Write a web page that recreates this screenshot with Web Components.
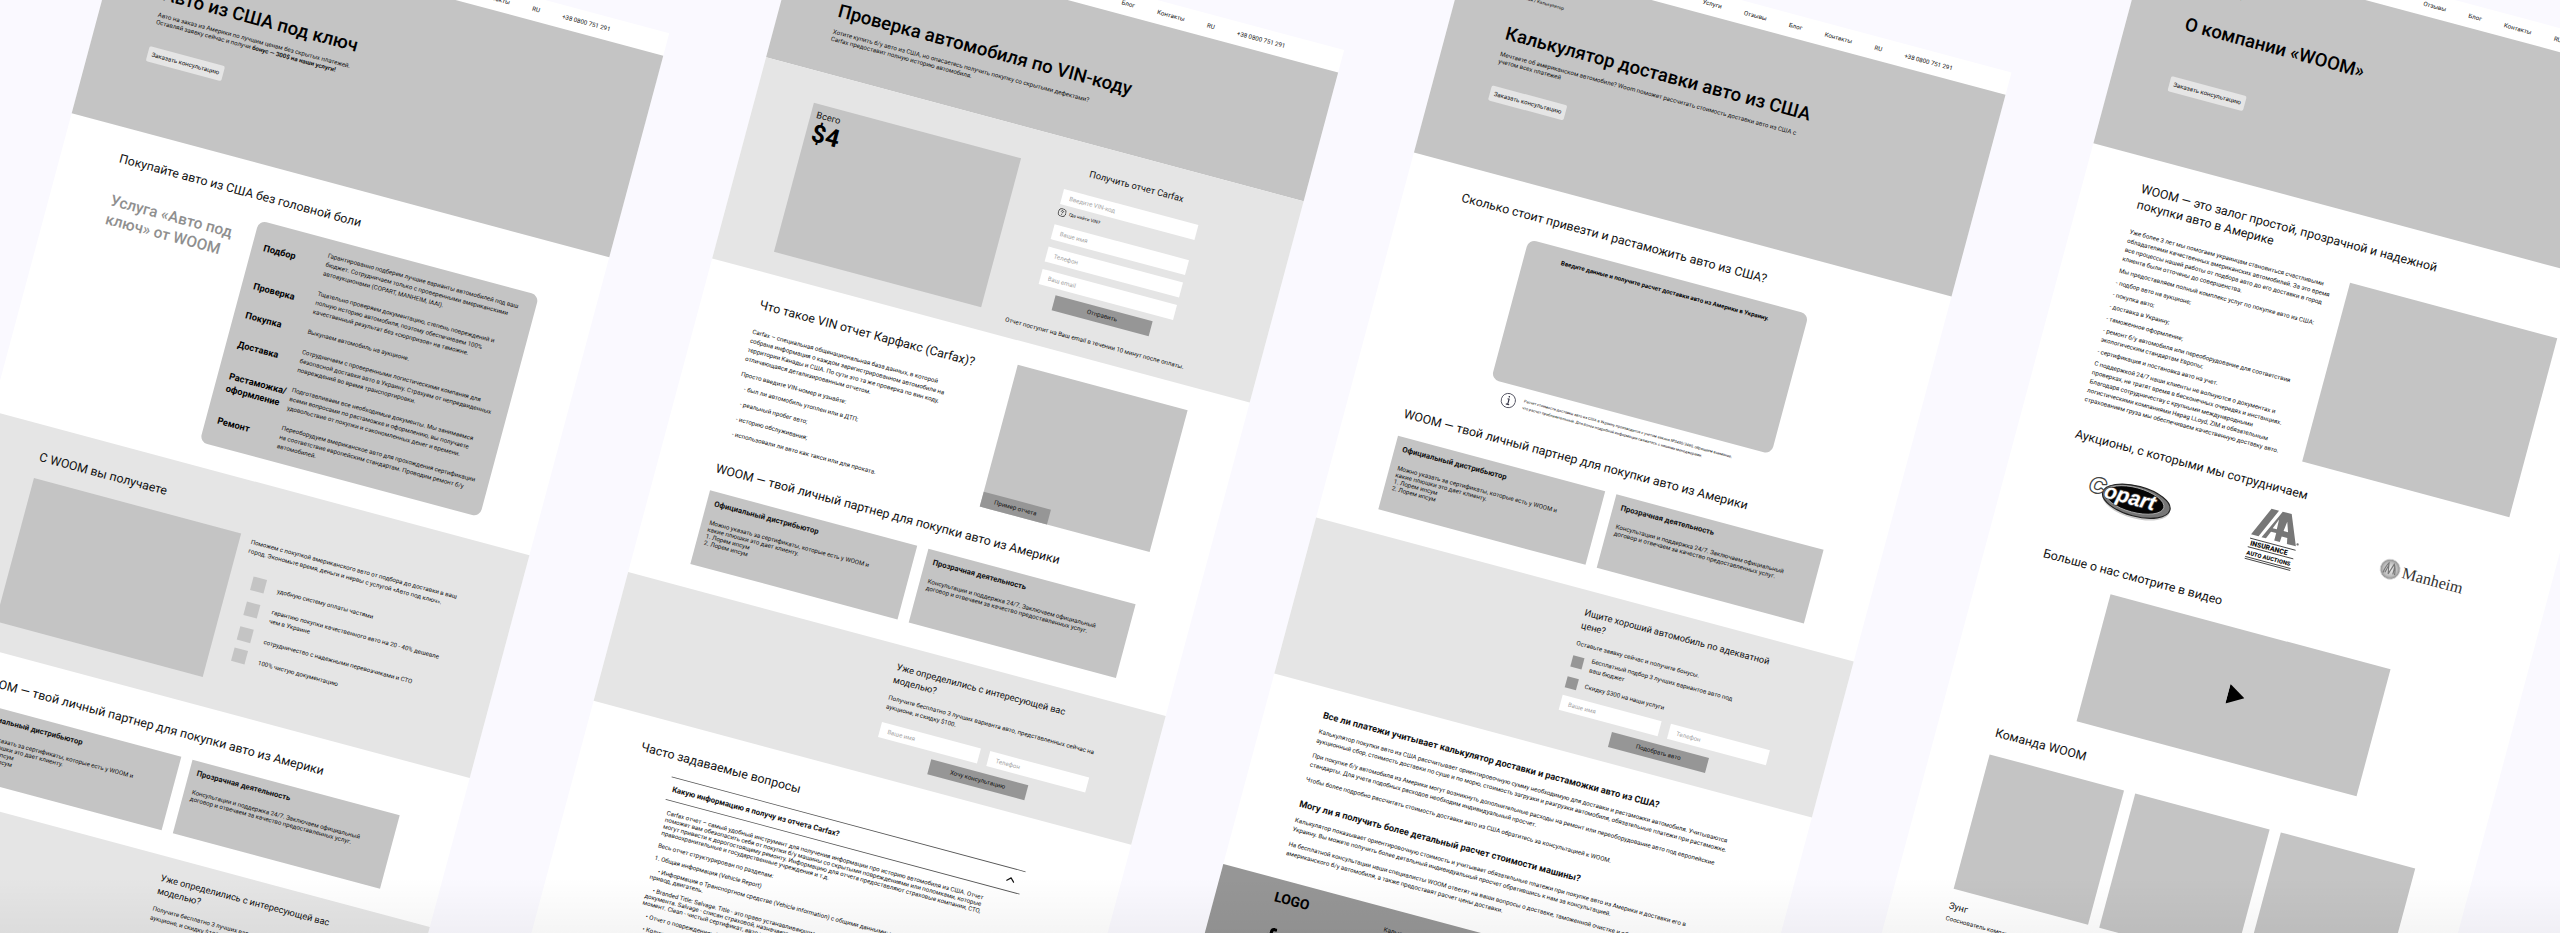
<!DOCTYPE html>
<html lang="ru">
<head>
<meta charset="utf-8">
<title>WOOM — прототипы страниц</title>
<style>
  html, body { margin: 0; height: 100%; }
  body { background: #faf9ff; font-family: Roboto, "Liberation Sans", sans-serif; color: #111; overflow: hidden; }
</style>
</head>
<body>
<wf-canvas>
  <wf-turnkey style="--x: 255px; --y: -365px"></wf-turnkey>
  <wf-carfax style="--x: 1953px; --y: -775px"></wf-carfax>
  <wf-calculator style="--x: 3636px; --y: -1166px"></wf-calculator>
  <wf-about style="--x: 5328px; --y: -1644px"></wf-about>
</wf-canvas>

<script>
const BASE = `
  *, *::before, *::after { box-sizing: border-box; }
  h1, h2, h3, p, ul { margin: 0; padding: 0; font-weight: 400; }
  ul { list-style: none; }
  h2 { font-size: 32px; line-height: 40px; white-space: nowrap; }
  h3 { font-size: 24px; line-height: 34px; white-space: nowrap; }
  p, li { font-size: 16px; line-height: 24px; white-space: nowrap; }
  a { color: inherit; text-decoration: none; }
  section { padding: 60px 150px 0; }
  .band { background: #e5e5e5; }
  .image { background: #c4c4c4; }
`;

function define(name, css, html, setup) {
  const template = document.createElement('template');
  template.innerHTML = `<style>${BASE}${css}</style>${html}`;
  customElements.define(name, class extends HTMLElement {
    constructor() {
      super();
      this.attachShadow({ mode: 'open' }).append(template.content.cloneNode(true));
    }
    connectedCallback() { if (setup) setup.call(this, this.shadowRoot); }
  });
}

/* Button with a slotted caption; the "light" kind sits on the hero. */
define('wf-button', `
  :host { display: block; width: 260px; }
  button { display: block; width: 100%; height: 40px; padding: 0; border: 0; background: #969696;
    font: 400 16px/40px Roboto, "Liberation Sans", sans-serif; color: #111; white-space: nowrap; }
  :host([kind="light"]) { width: 202px; }
  :host([kind="light"]) button { background: #e5e5e5; border-radius: 5px; }
`, `<button type="button"><slot></slot></button>`);

define('wf-field', `
  :host { display: block; }
  input { display: block; width: 100%; height: 40px; padding: 0 20px; border: 0; border-radius: 0; background: #fff;
    font: 400 16px/24px Roboto, "Liberation Sans", sans-serif; color: #111; }
  input::placeholder { color: #a6a6a6; opacity: 1; }
`, `<input type="text">`, function (root) {
  const input = root.querySelector('input');
  input.placeholder = this.getAttribute('label');
  input.setAttribute('aria-label', this.getAttribute('label'));
});

define('wf-nav', `
  :host { display: block; }
  nav { display: flex; justify-content: flex-end; gap: 60px; height: 60px; padding: 0 150px; }
  a { font-size: 16px; line-height: 60px; white-space: nowrap; }
`, `<nav>
  <a href="#services">Услуги</a><a href="#reviews">Отзывы</a><a href="#blog">Блог</a>
  <a href="#contacts">Контакты</a><a href="#lang">RU</a><a href="tel:+380800751291">+38 0800 751 291</a>
</nav>`);

define('wf-hero', `
  :host { display: block; height: 540px; padding: 72px 150px 0; background: #c4c4c4; }
  :host([short]) { height: 345px; }
  .crumb { height: 16px; font-size: 12px; line-height: 16px; }
  h1 { margin-top: 64px; font-size: 48px; line-height: 56px; font-weight: 500; white-space: nowrap; color: #000; }
  .sub { height: 38px; margin: 18px 0 56px; font-size: 16px; line-height: 19px; white-space: nowrap; }
`, `<div class="crumb"><slot name="crumb"></slot></div>
  <h1><slot></slot></h1>
  <div class="sub"><slot name="sub"></slot></div>
  <slot name="action"></slot>`);

/* Heading with two equal cards, shared by three boards. */
define('wf-partner', `
  :host { display: block; }
  section { padding-bottom: 62px; }
  .cards { display: grid; grid-template-columns: 1fr 1fr; gap: 30px; margin-top: 40px; }
  article { height: 197px; padding: 18px 20px; background: #c4c4c4; }
  b { display: block; font-size: 20px; line-height: 24px; font-weight: 700; white-space: nowrap; }
  article p { margin-top: 30px; line-height: 18px; }
`, `<section>
  <h2>WOOM — твой личный партнер для покупки авто из Америки</h2>
  <div class="cards">
    <article><b>Официальный дистрибьютор</b>
      <p>Можно указать за сертификаты, которые есть у WOOM и<br>какие плюшки это дает клиенту.<br>1. Лорем ипсум<br>2. Лорем ипсум</p></article>
    <article><b>Прозрачная деятельность</b>
      <p>Консультации и поддержка 24/7. Заключаем официальный<br>договор и отвечаем за качество предоставленных услуг.</p></article>
  </div>
</section>`);

/* Grey band with a short request form in its right half. */
define('wf-lead', `
  :host { display: block; background: #e5e5e5; padding: 40px 150px; }
  form { width: 555px; margin-left: auto; }
  .copy { margin: 19px 0 30px; font-size: 16px; line-height: 24px; white-space: nowrap; }
  .fields { display: grid; grid-template-columns: 1fr 1fr; gap: 25px; }
  wf-button { margin: 20px auto 0; }
`, `<form>
  <h3><slot name="title"></slot></h3>
  <div class="copy"><slot></slot></div>
  <div class="fields"><wf-field label="Ваше имя"></wf-field><wf-field label="Телефон"></wf-field></div>
  <wf-button><slot name="action"></slot></wf-button>
</form>`);

/* One artboard: header on top, its own slotted content below. */
define('wf-board', `
  :host { display: flex; flex-direction: column; width: 1440px; min-height: 3000px; background: #fff; }
`, `<wf-nav></wf-nav><slot></slot>`);

const BOARD = `:host { position: absolute; left: var(--x); top: var(--y); }`;

define('wf-turnkey', BOARD + `
  .service { display: grid; grid-template-columns: 390px 750px; margin-top: 42px; }
  .service > h2 { padding: 24px 0 0 6px; font-size: 40px; line-height: 50px; font-weight: 500; color: #8f8f8f; }
  .steps { display: grid; grid-template-columns: 166px 1fr; row-gap: 30px; align-items: center;
    padding: 30px; border-radius: 20px; background: #c4c4c4; }
  .steps b { font-size: 24px; line-height: 33px; height: 24px; font-weight: 700; display: flex; align-items: center; white-space: nowrap; color: #000; }
  .get { padding-bottom: 74px; padding-top: 62px; margin-top: 62px; }
  .cols { display: grid; grid-template-columns: 1fr 1fr; gap: 30px; margin-top: 37px; }
  .image { height: 384px; }
  .cols p { padding-top: 2px; }
  .perks { display: flex; gap: 33px; margin: 49px 0 0 30px; }
  .marks { display: grid; grid-template-rows: 67px 66px 57px 36px; }
  .marks i { width: 36px; height: 36px; background: #c4c4c4; }
  ul { display: flex; flex-direction: column; gap: 32px; padding-top: 9px; }
`, `<wf-board>
  <wf-hero>Авто из США под ключ
    <span slot="crumb">Главная / Авто под ключ</span>
    <span slot="sub">Авто на заказ из Америки по лучшим ценам без скрытых платежей.<br>Оставляй заявку сейчас и получи <strong>бонус — 300$ на наши услуги!</strong></span>
    <wf-button slot="action" kind="light">Заказать консультацию</wf-button>
  </wf-hero>
  <section>
    <h2>Покупайте авто из США без головной боли</h2>
    <div class="service">
      <h2>Услуга «Авто под<br>ключ» от WOOM</h2>
      <div class="steps">
        <b>Подбор</b><p>Гарантированно подберем лучшие варианты автомобилей под ваш<br>бюджет. Сотрудничаем только с проверенными американскими<br>автоаукционами (COPART, MANHEIM, IAAI).</p>
        <b>Проверка</b><p>Тщательно проверяем документацию, степень повреждений и<br>полную историю автомобиля, поэтому обеспечиваем 100%<br>качественный результат без «сюрпризов» на таможне.</p>
        <b>Покупка</b><p>Выкупаем автомобиль на аукционе.</p>
        <b>Доставка</b><p>Сотрудничаем с проверенными логистическими компания для<br>безопасной доставки авто в Украину. Страхуем от непредвиденных<br>повреждений во время транспортировки.</p>
        <b>Растаможка/<br>оформление</b><p>Подготавливаем все необходимые документы. Мы занимаемся<br>всеми вопросами по растаможке и оформлению, вы получаете<br>удовольствие от покупки и сэкономленных денег и времени.</p>
        <b>Ремонт</b><p>Переоборудуем американское авто для прохождения сертификации<br>на соответствие европейским стандартам. Проводим ремонт б/у<br>автомобилей.</p>
      </div>
    </div>
  </section>
  <section class="band get">
    <h2>С WOOM вы получаете</h2>
    <div class="cols">
      <div class="image"></div>
      <div>
        <p>Поможем с покупкой американского авто от подбора до доставки в ваш<br>город. Экономьте время, деньги и нервы с услугой «Авто под ключ».</p>
        <div class="perks">
          <div class="marks"><i></i><i></i><i></i><i></i></div>
          <ul>
            <li>удобную систему оплаты частями</li>
            <li>гарантию покупки качественного авто на 20 - 40% дешевле<br>чем в Украине</li>
            <li>сотрудничество с надежными перевозчиками и СТО</li>
            <li>100% чистую документацию</li>
          </ul>
        </div>
      </div>
    </div>
  </section>
  <wf-partner></wf-partner>
  <wf-lead>
    <span slot="title">Уже определились с интересующей вас<br>моделью?</span>
    Получите бесплатно 3 лучших варианта авто, представленных сейчас на<br>аукционе, и скидку $100.
    <span slot="action">Хочу консультацию</span>
  </wf-lead>
</wf-board>`);

define('wf-carfax', BOARD + `
  .order { display: grid; grid-template-columns: 1fr 1fr; gap: 30px; padding: 58px 150px 32px; }
  .offer { height: 399px; margin-top: 24px; padding: 14px 15px; }
  .offer span, .offer b { display: block; }
  .offer span { font-size: 24px; line-height: 28px; }
  .offer b { font-size: 64px; line-height: 68px; font-weight: 700; color: #000; }
  form { display: flex; flex-direction: column; align-items: center; }
  wf-field { width: 360px; margin-bottom: 20px; }
  wf-field:first-of-type { margin: 38px 0 10px; }
  .hint { display: flex; align-items: center; gap: 8px; width: 360px; height: 20px; margin-bottom: 24px; font-size: 12px; line-height: 20px; }
  .hint svg { width: 22px; height: 22px; }
  form wf-button { margin: -3px 0 42px; }
  .what { display: grid; grid-template-columns: 1fr 455px; padding-top: 61px; }
  .what p { margin-top: 17px; }
  .what h2 { margin-top: 2px; }
  .what h2 + p { margin-top: 41px; }
  .what ul { display: grid; gap: 16px; padding: 12px 0 0 17px; }
  .sample { display: flex; align-items: flex-end; height: 380px; }
  .sample wf-button { width: 180px; }
  .faq { padding-top: 62px; }
  details { margin: 35px 96px 0; }
  summary { display: flex; align-items: center; justify-content: space-between; height: 62px; padding: 0 20px 0 10px;
    border: solid #555; border-width: 2px 0; font-size: 20px; font-weight: 700; white-space: nowrap; }
  summary svg { width: 24px; height: 14px; }
  details div { padding: 23px 12px 0; display: grid; gap: 15px; }
  details p { line-height: 18px; }
  .point { text-indent: 17px; }
`, `<wf-board>
  <wf-hero short>Проверка автомобиля по VIN-коду
    <span slot="crumb">Главная / Carfax</span>
    <span slot="sub">Хотите купить б/у авто из США, но опасаетесь получить покупку со скрытыми дефектами?<br>Carfax предоставит полную историю автомобиля.</span>
  </wf-hero>
  <section class="band order">
    <div class="image offer"><span>Всего</span><b>$4</b></div>
    <form>
      <h3>Получить отчет Carfax</h3>
      <wf-field label="Введите VIN-код"></wf-field>
      <div class="hint">
        <svg viewBox="0 0 22 22" fill="none" stroke="#222" stroke-width="2"><circle cx="11" cy="11" r="10"/><path d="M8 9c0-4 6-4 6-1 0 2-3 2-3 5M11 15v2"/></svg>
        <a href="#vin">Где найти VIN?</a>
      </div>
      <wf-field label="Ваше имя"></wf-field>
      <wf-field label="Телефон"></wf-field>
      <wf-field label="Ваш email"></wf-field>
      <wf-button>Отправить</wf-button>
      <p>Отчет поступит на Ваш email в течении 10 минут после оплаты.</p>
    </form>
  </section>
  <section class="what">
    <div>
      <h2>Что такое VIN отчет Карфакс (Carfax)?</h2>
      <p>Carfax – специальная общенациональная база данных, в которой<br>собрана информация о каждом зарегистрированном автомобиле на<br>территории Канады и США. По сути это та же проверка по вин коду,<br>отличающаяся детализированным отчетом.</p>
      <p>Просто введите VIN-номер и узнайте:</p>
      <ul>
        <li>- был ли автомобиль утоплен или в ДТП;</li>
        <li>- реальный пробег авто;</li>
        <li>- историю обслуживания;</li>
        <li>- использовали ли авто как такси или для проката.</li>
      </ul>
    </div>
    <div class="image sample"><wf-button>Пример отчета</wf-button></div>
  </section>
  <wf-partner></wf-partner>
  <wf-lead>
    <span slot="title">Уже определились с интересующей вас<br>моделью?</span>
    Получите бесплатно 3 лучших варианта авто, представленных сейчас на<br>аукционе, и скидку $100.
    <span slot="action">Хочу консультацию</span>
  </wf-lead>
  <section class="faq">
    <h2>Часто задаваемые вопросы</h2>
    <details open>
      <summary>Какую информацию я получу из отчета Carfax?
        <svg viewBox="0 0 24 14" fill="none" stroke="#111" stroke-width="3"><path d="M2 12 12 2l10 10"/></svg></summary>
      <div>
        <p>Carfax отчет – самый удобный инструмент для получения информации про историю автомобиля из США. Отчет<br>поможет вам обезопасить себя от покупки б/у машины со скрытыми повреждениями или поломками, которые<br>могут привести к дорогостоящему ремонту. Информацию для отчета предоставляют страховые компании, СТО,<br>правоохранительные и государственные учреждения и т.д.</p>
        <p>Весь отчет структурирован по разделам:</p>
        <p>1. Общая информация (Vehicle Report)</p>
        <p class="point">• Информация о Транспортном средстве (Vehicle information) с общими данными: марка, модель, год,<br>привод, двигатель.</p>
        <p class="point">• Branded Title: Salvage. Title - это право устанавливающие<br>документа. Salvage - списан страховой, назначается<br>момент. Clean - чистый сертификат, авто не</p>
        <p class="point">• Отчет о повреждениях (Damage)</p>
        <p class="point">• Количество владельцев</p>
      </div>
    </details>
  </section>
</wf-board>`);

define('wf-calculator', BOARD + `
  .calc { width: 750px; height: 375px; margin: 40px 0 0 195px; padding-top: 26px; border-radius: 20px; text-align: center; }
  .calc b { font-size: 16px; line-height: 24px; font-weight: 700; white-space: nowrap; color: #000; }
  .note { display: flex; align-items: center; gap: 20px; margin: 22px 0 2px 232px; }
  .note svg { width: 40px; height: 40px; }
  .note p { font-size: 10px; line-height: 18px; }
  .bonus { display: grid; grid-template-columns: 30px 1fr; align-items: center; gap: 17px 20px; margin-top: 12px; margin-bottom: -10px; }
  .bonus i { width: 30px; height: 30px; background: #969696; }
  .answers { padding-top: 54px; padding-bottom: 58px; }
  .answers h3 { font-weight: 700; }
  .answers p { margin-top: 16px; }
  .answers h3 + p { margin-top: 15px; }
  .answers p + h3 { margin-top: 36px; }
  footer { flex: 1; display: grid; grid-template-columns: 295px 1fr; padding: 26px 150px; background: #969696; }
  footer b { display: block; font-size: 36px; line-height: 42px; font-weight: 700; color: #000; }
  footer svg { display: block; width: 24px; height: 44px; margin: 58px 0 0 5px; }
  footer > a { font-size: 16px; line-height: 24px; padding-top: 18px; }
`, `<wf-board>
  <wf-hero>Калькулятор доставки авто из США
    <span slot="crumb">Главная / Калькулятор</span>
    <span slot="sub">Мечтаете об американском автомобиле? Woom поможет рассчитать стоимость доставки авто из США с<br>учетом всех платежей</span>
    <wf-button slot="action" kind="light">Заказать консультацию</wf-button>
  </wf-hero>
  <section>
    <h2>Сколько стоит привезти и растаможить авто из США?</h2>
    <div class="image calc"><b>Введите данные и получите расчет доставки авто из Америки в Украину.</b></div>
    <div class="note">
      <svg viewBox="0 0 40 40" fill="none" stroke="#334"><circle cx="20" cy="20" r="18.500" stroke-width="2"/><path d="M17 16h4v14M16 30h9" stroke-width="3"/><circle cx="20" cy="10" r="2" fill="#334" stroke="none"/></svg>
      <p>Расчет стоимости доставки авто из США в Украину производится с учетом закона №3480/3490, обращаем внимание,<br>что расчет приблизительный. Для более подробной информации свяжитесь с нашими менеджерами.</p>
    </div>
  </section>
  <wf-partner></wf-partner>
  <wf-lead>
    <span slot="title">Ищите хороший автомобиль по адекватной<br>цене?</span>
    Оставьте заявку сейчас и получите бонусы.
    <div class="bonus">
      <i></i><span>Бесплатный подбор 3 лучших вариантов авто под<br>ваш бюджет</span>
      <i></i><span>Скидку $300 на наши услуги</span>
    </div>
    <span slot="action">Подобрать авто</span>
  </wf-lead>
  <section class="answers">
    <h3>Все ли платежи учитывает калькулятор доставки и растаможки авто из США?</h3>
    <p>Калькулятор покупки авто из США рассчитывает ориентировочную сумму необходимую для доставки и растаможки автомобиля. Учитываются<br>аукционный сбор, стоимость доставки по суше и по морю, стоимость загрузки и разгрузки автомобиля, обязательные платежи при растаможке.</p>
    <p>При покупке б/у автомобиля из Америки могут возникнуть дополнительные расходы на ремонт или переоборудование авто под европейские<br>стандарты. Для учета подобных расходов необходим индивидуальный просчет.</p>
    <p>Чтобы более подробно рассчитать стоимость доставки авто из США обратитесь за консультацией к WOOM.</p>
    <h3>Могу ли я получить более детальный расчет стоимости машины?</h3>
    <p>Калькулятор показывает ориентировочную стоимость и учитывает обязательные платежи при покупке авто из Америки и доставки его в<br>Украину. Вы можете получить более детальный индивидуальный просчет обратившись к нам за консультацией.</p>
    <p>На бесплатной консультации наши специалисты WOOM ответят на ваши вопросы о доставке, таможенной очистке и обслуживании<br>американского б/у автомобиля, а также предоставят расчет цены доставки.</p>
  </section>
  <footer>
    <div><b>LOGO</b><svg viewBox="0 0 24 44"><path d="M7 44V25H0v-8h7v-6C7 4 11 0 18 0h6v8h-4c-4 0-5 1-5 4v5h9l-1 8h-8v19z"/></svg></div>
    <a href="#calculator">Калькулятор</a>
  </footer>
</wf-board>`);

define('wf-about', BOARD + `
  .lead { line-height: 42px; }
  .cols { display: grid; grid-template-columns: 1fr 1fr; gap: 30px; margin-top: 33px; align-items: start; }
  .cols .image { height: 479px; }
  .copy { display: grid; gap: 8px; padding-top: 8px; margin-bottom: 60px; }
  .logos { display: flex; justify-content: space-between; align-items: center; margin: 37px 0 99px; padding: 0 68px; }
  .logos svg { display: block; overflow: visible; }
  .video { display: grid; place-items: center; width: 750px; height: 340px; margin: 39px 0 62px 195px; }
  .video button { padding: 0 0 0 14px; border: 0; background: none; }
  .video svg { display: block; width: 44px; height: 52px; }
  .team { display: grid; grid-template-columns: repeat(3, minmax(0, 1fr)); gap: 30px; margin-top: 39px; }
  .team .image { height: 360px; }
  .team b { display: block; margin: 30px 0 8px; font-size: 24px; line-height: 28px; font-weight: 400; }
`, `<wf-board>
  <wf-hero>О компании «WOOM»
    <span slot="crumb">Главная / О компании</span>
    <wf-button slot="action" kind="light">Заказать консультацию</wf-button>
  </wf-hero>
  <section>
    <h2 class="lead">WOOM — это залог простой, прозрачной и надежной<br>покупки авто в Америке</h2>
    <div class="cols">
      <div class="copy">
        <p>Уже более 3 лет мы помогаем украинцам становиться счастливыми<br>обладателями качественных американских автомобилей. За это время<br>все процессы нашей работы от подбора авто до его доставки в город<br>клиента были отточены до совершенства.</p>
        <p>Мы предоставляем полный комплекс услуг по покупке авто из США:</p>
        <p>- подбор авто на аукционе;</p>
        <p>- покупка авто;</p>
        <p>- доставка в Украину;</p>
        <p>- таможенное оформление;</p>
        <p>- ремонт б/у автомобиля или переоборудование для соответствия<br>экологическим стандартам Европы;</p>
        <p>- сертификация и постановка авто на учет.</p>
        <p>С поддержкой 24/7 наши клиенты не волнуются о документах и<br>проверках, не тратят время в бесконечных очередях и инстанциях.<br>Благодаря сотрудничеству с крупными международными<br>логистическими компаниями Hapag LLoyd, ZIM и обязательным<br>страхованием груза мы обеспечиваем качественную доставку авто.</p>
      </div>
      <div class="image"></div>
    </div>
    <h2>Аукционы, с которыми мы сотрудничаем</h2>
    <div class="logos">
      <svg width="220" height="90" viewBox="0 0 220 90" role="img" aria-label="Copart">
        <ellipse cx="130" cy="50" rx="90" ry="40" fill="#ccc"/>
        <ellipse cx="129" cy="45" rx="90" ry="39" fill="#777" stroke="#222" stroke-width="3"/>
        <ellipse cx="124" cy="43" rx="78" ry="32" fill="#050505" stroke="#bbb" stroke-width="2"/>
        <g font-family="Liberation Sans, sans-serif" font-weight="700" font-style="italic" fill="#fff" stroke="#444" paint-order="stroke" stroke-linejoin="round">
          <text x="2" y="50" font-size="54" stroke-width="7">C</text>
          <text x="43" y="57" font-size="54" stroke-width="4">opart</text>
        </g>
      </svg>
      <svg width="126" height="144" viewBox="0 0 126 144" role="img" aria-label="IAA Insurance Auto Auctions">
        <path fill="#777" d="M34 0h20L20 78H0zM64 0h24l32 78H96l-3-15H78l-1 15H62V58H48l-8 20H28L58 14zM82 22l-3 26h12zM60 22 50 48h11z" fill-rule="evenodd"/>
        <circle cx="123" cy="72" r="3" fill="#777"/>
        <path stroke="#222" stroke-width="2" d="M0 88h122M0 111h122M0 137h122M0 142h122"/>
        <g font-family="Roboto, sans-serif" font-weight="900" fill="#111">
          <text x="4" y="106" font-size="18">INSURANCE</text>
          <text x="1" y="131" font-size="15">AUTO AUCTIONS</text>
        </g>
      </svg>
      <svg width="222" height="58" viewBox="0 0 222 58" role="img" aria-label="Manheim">
        <defs><radialGradient id="ball"><stop offset="0" stop-color="#f2f2f2"/><stop offset="0.7" stop-color="#bbb"/><stop offset="1" stop-color="#8c8c8c"/></radialGradient></defs>
        <circle cx="27" cy="29" r="26" fill="url(#ball)" stroke="#ddd" stroke-width="2"/>
        <path fill="none" stroke="#777" stroke-width="3" d="M11 42c2-12 5-22 9-28l5 28 9-28c5 7 7 17 8 27M16 40c2-8 3-14 5-20M37 40V20"/>
        <text x="60" y="43" font-family="Liberation Serif, serif" font-size="42" fill="#333">Manheim</text>
      </svg>
    </div>
    <h2>Больше о нас смотрите в видео</h2>
    <div class="image video"><button type="button" aria-label="Смотреть видео"><svg viewBox="0 0 44 52"><path d="M0 0 44 26 0 52z"/></svg></button></div>
    <h2>Команда WOOM</h2>
    <div class="team">
      <div><div class="image"></div><b>Зунг</b><p>Сооснователь компании</p></div>
      <div class="image"></div>
      <div class="image"></div>
    </div>
  </section>
</wf-board>`);

/* The tilted plane: 6624 canvas units always span the window's width. */
define('wf-canvas', `
  :host { display: block; position: relative; height: 100%; overflow: hidden; }
  .plane { position: absolute; left: 0; top: 0; transform-origin: 0 0; transform: rotate(15deg) scale(var(--zoom)); }
  .fade { position: absolute; inset: auto 0 0; height: 6%; pointer-events: none;
    background: linear-gradient(transparent, rgba(0, 0, 0, 0.04)); }
`, `<div class="plane"><slot></slot></div><div class="fade"></div>`, function () {
  const fit = () => this.style.setProperty('--zoom', innerWidth / 6624);
  addEventListener('resize', fit);
  fit();
});
</script>
</body>
</html>
